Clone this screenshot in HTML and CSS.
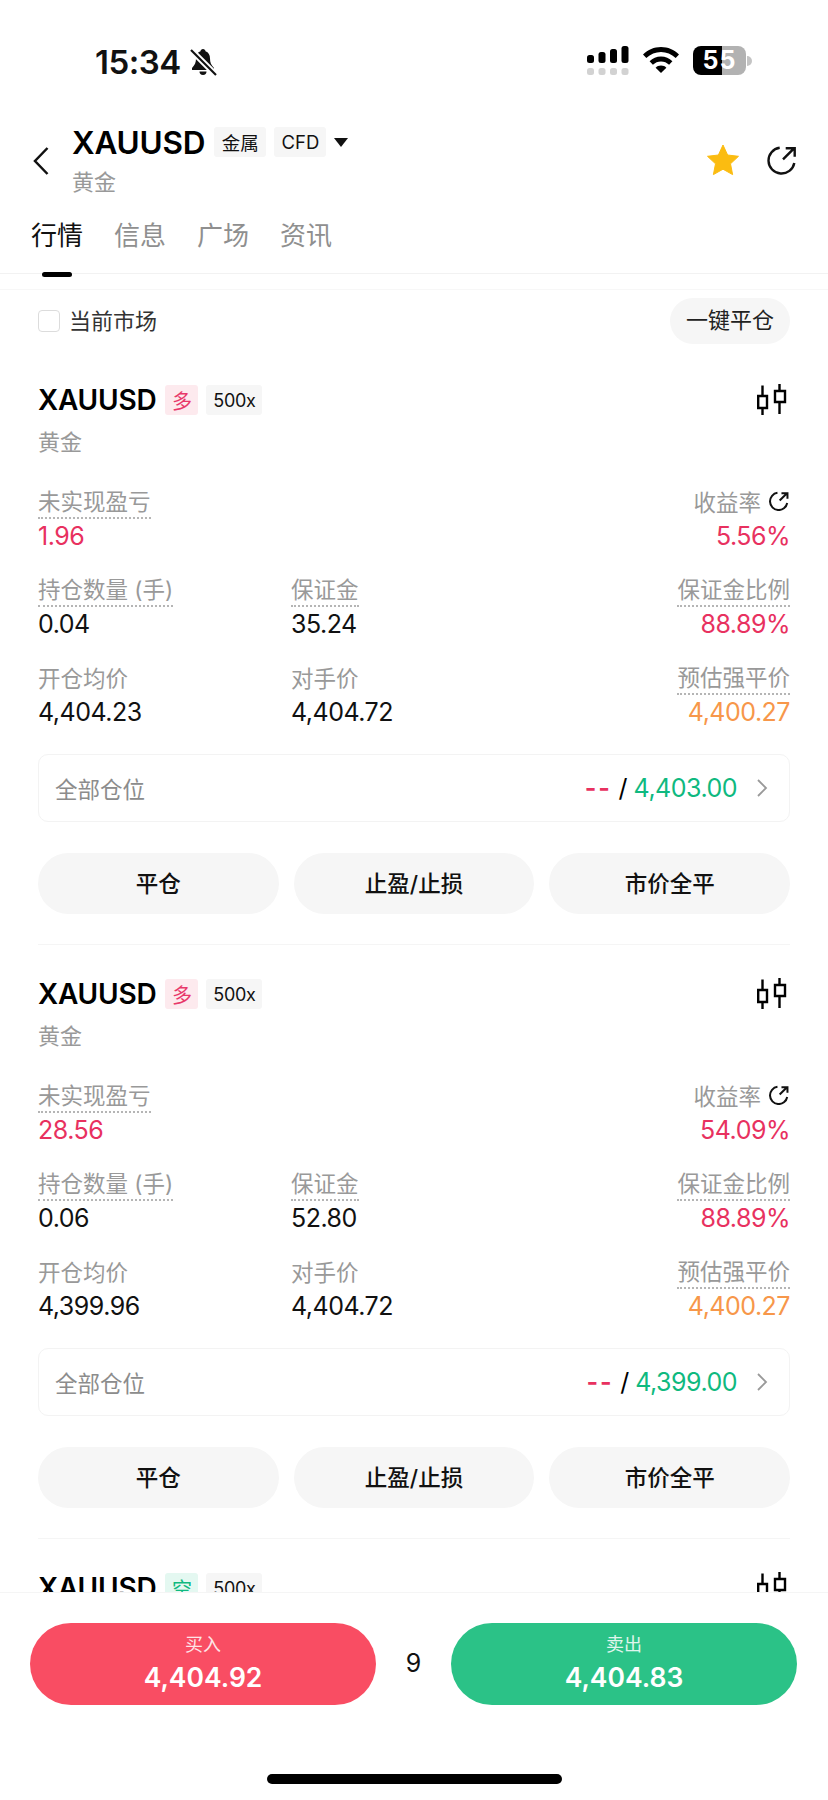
FILE: index.html
```html
<!DOCTYPE html>
<html lang="en">
<head>
    <meta charset="UTF-8">
    <meta name="viewport" content="width=device-width, initial-scale=1.0">
    <title>XAUUSD</title>
    <link rel="stylesheet" href="styles.css">
</head>
<body>
<div class="page">
    <div class="status-bar">
        <div class="status-left">
            <span class="time">15:34</span>
            <svg class="bell" width="28" height="28" viewBox="0 0 28 28">
                <path d="M14 1c-1.500 0-2.300 1-2.500 2.200C8.500 4.200 7 7 7 10.500c0 4-1.200 6.500-4 9.500v2h22v-2c-2.800-3-4-5.500-4-9.500 0-3.500-1.500-6.300-4.500-7.300C16.300 2 15.500 1 14 1z" fill="#111"/>
                <path d="M10.500 23.500a3.500 3.500 0 0 0 7 0z" fill="#111"/>
                <path d="M2 2l25 25" stroke="#fff" stroke-width="6"/>
                <path d="M2 2l25 25" stroke="#111" stroke-width="2.200"/>
            </svg>
        </div>
        <div class="status-right">
            <svg class="signal" width="42" height="30" viewBox="0 0 42 30">
                <rect x="0" y="9" width="7" height="8" rx="2.500" fill="#000"/>
                <rect x="11.500" y="6" width="7" height="11" rx="2.500" fill="#000"/>
                <rect x="23" y="3" width="7" height="14" rx="2.500" fill="#000"/>
                <rect x="34.500" y="0" width="7" height="17" rx="2.500" fill="#000"/>
                <rect x="0" y="22" width="7" height="7" rx="2.500" fill="#d2d2d2"/>
                <rect x="11.500" y="22" width="7" height="7" rx="2.500" fill="#d2d2d2"/>
                <rect x="23" y="22" width="7" height="7" rx="2.500" fill="#d2d2d2"/>
                <rect x="34.500" y="22" width="7" height="7" rx="2.500" fill="#d2d2d2"/>
            </svg>
            <svg class="wifi" width="36" height="26" viewBox="0 0 36 26">
                <path d="M18 0C11 0 5 2.700 0 7.500l3.300 3.600C7.500 7 12.500 5 18 5s10.500 2 14.700 6.100L36 7.500C31 2.700 25 0 18 0z" fill="#000"/>
                <path d="M18 9.500c-4.500 0-8.300 1.700-11.400 4.700l3.300 3.500c2.200-2.100 5-3.300 8.100-3.300s5.900 1.200 8.100 3.300l3.300-3.500C26.300 11.200 22.500 9.500 18 9.500z" fill="#000"/>
                <path d="M18 18.500c-2.200 0-4.100.8-5.400 2.200L18 26l5.400-5.300c-1.300-1.400-3.200-2.200-5.400-2.200z" fill="#000"/>
            </svg>
            <div class="battery"><span class="battery-text">55</span></div>
            <span class="battery-nub"></span>
        </div>
    </div>

    <div class="top-head">
        <svg class="back" width="18" height="30" viewBox="0 0 18 30">
            <path d="M15.500 2L3 15l12.500 13" fill="none" stroke="#111" stroke-width="2.500"/>
        </svg>
        <div class="top-title">
            <div class="title-row">
                <span class="symbol-big">XAUUSD</span>
                <span class="tag tag-top">金属</span>
                <span class="tag tag-top">CFD</span>
                <span class="caret"></span>
            </div>
            <div class="sub-name">黄金</div>
        </div>
        <svg class="star" width="32" height="32" viewBox="0 0 32 32">
            <path d="M16 1l4.600 10 10.900 1.300-8 7.500 2.100 10.800L16 25.200 6.400 30.600l2.100-10.800-8-7.500L11.400 11z" fill="#fbbc11" stroke="#fbbc11" stroke-linejoin="round"/>
        </svg>
        <svg class="share" width="30" height="30" viewBox="0 0 30 30">
            <path d="M12.700 2.700A13 13 0 1 0 27.300 18" fill="none" stroke="#111" stroke-width="2.400"/>
            <path d="M16 14.300L27 3.300M18.700 3.300h9v8.400" fill="none" stroke="#111" stroke-width="2.400"/>
        </svg>
    </div>

    <div class="tabs">
        <span class="tab tab-active">行情</span>
        <span class="tab">信息</span>
        <span class="tab">广场</span>
        <span class="tab">资讯</span>
    </div>
    <div class="tabs-gap"></div>

    <div class="content">
        <div class="toolbar">
            <span class="check"></span>
            <span class="check-label">当前市场</span>
            <span class="close-all">一键平仓</span>
        </div>

        <div class="card">
            <div class="card-head">
                <span class="symbol">XAUUSD</span>
                <span class="tag tag-long">多</span>
                <span class="tag tag-lev">500x</span>
                <svg class="candle" width="30" height="32" viewBox="0 0 30 32">
                    <path d="M5.500 1.500V12M5.500 24v7M1.200 12h8.800v12H1.200zM22.500 0v7M22.500 18v12M18 7h10v11H18z" fill="none" stroke="#000" stroke-width="2.400"/>
                </svg>
            </div>
            <div class="card-name">黄金</div>
            <div class="stat-row first">
                <div class="stat">
                    <span class="label dotted">未实现盈亏</span>
                    <span class="value red">1.96</span>
                </div>
                <div class="stat right">
                    <span class="label">收益率
                        <svg class="share-small" width="20" height="20" viewBox="0 0 30 30">
                            <path d="M12.700 2.700A13 13 0 1 0 27.300 18" fill="none" stroke="#111" stroke-width="3"/>
                            <path d="M16 14.300L27 3.300M18.700 3.300h9v8.400" fill="none" stroke="#111" stroke-width="3"/>
                        </svg>
                    </span>
                    <span class="value red">5.56%</span>
                </div>
            </div>
            <div class="stat-row">
                <div class="stat col-a">
                    <span class="label dotted">持仓数量 (手)</span>
                    <span class="value">0.04</span>
                </div>
                <div class="stat col-b">
                    <span class="label dotted">保证金</span>
                    <span class="value">35.24</span>
                </div>
                <div class="stat right">
                    <span class="label dotted">保证金比例</span>
                    <span class="value red">88.89%</span>
                </div>
            </div>
            <div class="stat-row">
                <div class="stat col-a">
                    <span class="label">开仓均价</span>
                    <span class="value">4,404.23</span>
                </div>
                <div class="stat col-b">
                    <span class="label">对手价</span>
                    <span class="value">4,404.72</span>
                </div>
                <div class="stat right">
                    <span class="label dotted">预估强平价</span>
                    <span class="value orange">4,400.27</span>
                </div>
            </div>
            <div class="all-pos">
                <span class="all-label">全部仓位</span>
                <span class="all-value"><span class="red dashes">--</span> / <span class="green">4,403.00</span></span>
                <svg class="chev" width="12" height="20" viewBox="0 0 12 20">
                    <path d="M2 2l8 8-8 8" fill="none" stroke="#999" stroke-width="1.800"/>
                </svg>
            </div>
            <div class="actions">
                <span class="action">平仓</span>
                <span class="action">止盈/止损</span>
                <span class="action">市价全平</span>
            </div>
        </div>

        <div class="card">
            <div class="card-head">
                <span class="symbol">XAUUSD</span>
                <span class="tag tag-long">多</span>
                <span class="tag tag-lev">500x</span>
                <svg class="candle" width="30" height="32" viewBox="0 0 30 32">
                    <path d="M5.500 1.500V12M5.500 24v7M1.200 12h8.800v12H1.200zM22.500 0v7M22.500 18v12M18 7h10v11H18z" fill="none" stroke="#000" stroke-width="2.400"/>
                </svg>
            </div>
            <div class="card-name">黄金</div>
            <div class="stat-row first">
                <div class="stat">
                    <span class="label dotted">未实现盈亏</span>
                    <span class="value red">28.56</span>
                </div>
                <div class="stat right">
                    <span class="label">收益率
                        <svg class="share-small" width="20" height="20" viewBox="0 0 30 30">
                            <path d="M12.700 2.700A13 13 0 1 0 27.300 18" fill="none" stroke="#111" stroke-width="3"/>
                            <path d="M16 14.300L27 3.300M18.700 3.300h9v8.400" fill="none" stroke="#111" stroke-width="3"/>
                        </svg>
                    </span>
                    <span class="value red">54.09%</span>
                </div>
            </div>
            <div class="stat-row">
                <div class="stat col-a">
                    <span class="label dotted">持仓数量 (手)</span>
                    <span class="value">0.06</span>
                </div>
                <div class="stat col-b">
                    <span class="label dotted">保证金</span>
                    <span class="value">52.80</span>
                </div>
                <div class="stat right">
                    <span class="label dotted">保证金比例</span>
                    <span class="value red">88.89%</span>
                </div>
            </div>
            <div class="stat-row">
                <div class="stat col-a">
                    <span class="label">开仓均价</span>
                    <span class="value">4,399.96</span>
                </div>
                <div class="stat col-b">
                    <span class="label">对手价</span>
                    <span class="value">4,404.72</span>
                </div>
                <div class="stat right">
                    <span class="label dotted">预估强平价</span>
                    <span class="value orange">4,400.27</span>
                </div>
            </div>
            <div class="all-pos">
                <span class="all-label">全部仓位</span>
                <span class="all-value"><span class="red dashes">--</span> / <span class="green">4,399.00</span></span>
                <svg class="chev" width="12" height="20" viewBox="0 0 12 20">
                    <path d="M2 2l8 8-8 8" fill="none" stroke="#999" stroke-width="1.800"/>
                </svg>
            </div>
            <div class="actions">
                <span class="action">平仓</span>
                <span class="action">止盈/止损</span>
                <span class="action">市价全平</span>
            </div>
        </div>

        <div class="card">
            <div class="card-head">
                <span class="symbol">XAUUSD</span>
                <span class="tag tag-short">空</span>
                <span class="tag tag-lev">500x</span>
                <svg class="candle" width="30" height="32" viewBox="0 0 30 32">
                    <path d="M5.500 1.500V12M5.500 24v7M1.200 12h8.800v12H1.200zM22.500 0v7M22.500 18v12M18 7h10v11H18z" fill="none" stroke="#000" stroke-width="2.400"/>
                </svg>
            </div>
        </div>
    </div>

    <div class="bottom-bar">
        <div class="trade-btn buy">
            <span class="trade-label">买入</span>
            <span class="trade-price">4,404.92</span>
        </div>
        <span class="spread">9</span>
        <div class="trade-btn sell">
            <span class="trade-label">卖出</span>
            <span class="trade-price">4,404.83</span>
        </div>
    </div>
    <div class="home-area"><span class="home-bar"></span></div>
</div>
</body>
</html>
```
FILE: styles.css
```css
* {
    box-sizing: border-box;
}

body {
    margin: 0;
    background-color: #fff;
    color: #000;
    font-family: Inter, "Noto Sans CJK SC", sans-serif;
}

.page {
    width: 828px;
    height: 1800px;
    display: flex;
    flex-direction: column;
    overflow: hidden;
}

/* status bar */
.status-bar {
    height: 110px;
    flex-shrink: 0;
    display: flex;
    justify-content: space-between;
    padding: 46px 76px 0 95px;
}

.status-left {
    display: flex;
    align-items: flex-start;
    gap: 8px;
}

.time {
    font-size: 33px;
    font-weight: 600;
    line-height: 32px;
    letter-spacing: -0.5px;
    color: #111;
}

.bell {
    margin-top: 2px;
}

.status-right {
    display: flex;
    align-items: flex-start;
}

.wifi {
    margin: 1px 14px 0;
}

.battery {
    width: 53px;
    height: 29px;
    border-radius: 8px;
    background: linear-gradient(to right, #000 55%, #b2b2b2 55%);
    color: #fff;
    text-align: center;
}

.battery-text {
    font-size: 25px;
    font-weight: 700;
    line-height: 29px;
    letter-spacing: 1px;
}

.battery-nub {
    width: 5px;
    height: 10px;
    margin: 10px 0 0 1px;
    border-radius: 0 5px 5px 0;
    background-color: #c4c4c4;
}

/* header */
.top-head {
    height: 92px;
    flex-shrink: 0;
    display: flex;
    align-items: flex-start;
    padding: 15px 31px 0 32px;
}

.back {
    margin: 21px 22px 0 0;
}

.top-title {
    flex: 1;
}

.title-row {
    display: flex;
    align-items: center;
    height: 34px;
}

.symbol-big {
    font-size: 31.500px;
    font-weight: 600;
    letter-spacing: -0.2px;
    margin-right: 9px;
}

.tag {
    display: inline-flex;
    align-items: center;
    justify-content: center;
    border-radius: 3px;
    background-color: #f6f6f6;
    color: #111;
    font-size: 18.500px;
}

.tag-top {
    width: 52px;
    height: 30px;
    margin-right: 8px;
}

.caret {
    width: 0;
    height: 0;
    border-left: 7px solid transparent;
    border-right: 7px solid transparent;
    border-top: 9px solid #111;
}

.sub-name {
    margin-top: 8px;
    font-size: 22px;
    line-height: 30px;
    color: #999;
}

.star {
    margin: 19px 28px 0 0;
}

.share {
    margin-top: 20px;
}

/* tabs */
.tabs {
    height: 72px;
    flex-shrink: 0;
    display: flex;
    gap: 31px;
    padding: 16px 0 0 31px;
    border-bottom: 1px solid #f2f2f2;
}

.tab {
    position: relative;
    width: 52px;
    font-size: 26px;
    line-height: 36px;
    color: #8f8f8f;
}

.tab-active {
    color: #111;
}

.tab-active::after {
    content: "";
    position: absolute;
    left: 11px;
    top: 54px;
    width: 30px;
    height: 5px;
    border-radius: 3px;
    background-color: #000;
}

.tabs-gap {
    height: 16px;
    flex-shrink: 0;
    border-bottom: 1px solid #f7f7f7;
}

/* scroll area */
.content {
    flex: 1;
    overflow: hidden;
}

.toolbar {
    display: flex;
    align-items: center;
    height: 46px;
    margin-top: 8px;
    padding: 0 38px;
}

.check {
    width: 22px;
    height: 22px;
    border: 1.500px solid #dcdcdc;
    border-radius: 4px;
}

.check-label {
    margin-left: 9px;
    padding-bottom: 4px;
    font-size: 22px;
    color: #333;
}

.close-all {
    margin-left: auto;
    width: 120px;
    height: 46px;
    border-radius: 23px;
    background-color: #f6f6f6;
    text-align: center;
    font-size: 22px;
    line-height: 44px;
    color: #222;
}

.card {
    margin: 0 38px;
    padding: 40px 0 30px;
    border-bottom: 1px solid #f5f5f5;
}

.card + .card {
    padding-top: 33px;
}

.card-head {
    display: flex;
    align-items: center;
    height: 32px;
}

.symbol {
    font-size: 28px;
    font-weight: 600;
    letter-spacing: -0.2px;
    margin-right: 9px;
}

.tag-long,
.tag-short,
.tag-lev {
    height: 30px;
}

.tag-long {
    width: 33px;
    margin-right: 8px;
    background-color: #fdeaee;
    color: #e8386a;
    font-size: 20px;
}

.tag-short {
    width: 33px;
    margin-right: 8px;
    background-color: #e4f8f1;
    color: #0fb97f;
    font-size: 20px;
}

.tag-lev {
    width: 56px;
    font-size: 18px;
    letter-spacing: -0.3px;
}

.candle {
    margin-left: auto;
    margin-right: 3px;
}

.card-name {
    margin-top: 11px;
    font-size: 22px;
    line-height: 30px;
    color: #999;
}

.stat-row {
    display: flex;
    margin-top: 22px;
}

.stat-row.first {
    margin-top: 28px;
    justify-content: space-between;
}

.stat {
    display: flex;
    flex-direction: column;
    align-items: flex-start;
}

.col-a {
    width: 253px;
}

.col-b {
    flex: 1;
}

.right {
    align-items: flex-end;
}

.label {
    display: flex;
    align-items: center;
    height: 34px;
    padding-bottom: 2px;
    font-size: 22.500px;
    color: #999;
}

.dotted {
    border-bottom: 2px dotted #b5b5b5;
}

.share-small {
    margin: 0 1px 0 8px;
}

.value {
    margin-top: 2px;
    font-size: 25px;
    line-height: 30px;
    letter-spacing: -0.5px;
    color: #111;
}

.red {
    color: #e8315f;
}

.orange {
    color: #f7974a;
}

.green {
    color: #0fb97f;
}

.all-pos {
    display: flex;
    align-items: center;
    height: 68px;
    margin-top: 27px;
    padding: 0 21px 0 16px;
    border: 1.500px solid #f3f3f3;
    border-radius: 10px;
}

.all-label {
    font-size: 22.500px;
    color: #8c8c8c;
}

.all-value {
    margin-left: auto;
    font-size: 25px;
    letter-spacing: -0.5px;
}

.dashes {
    font-weight: 600;
    letter-spacing: 2px;
}

.chev {
    margin-left: 19px;
}

.actions {
    display: flex;
    gap: 15px;
    margin-top: 31px;
}

.action {
    flex: 1;
    height: 61px;
    border-radius: 31px;
    background-color: #f6f6f6;
    text-align: center;
    font-size: 22.500px;
    font-weight: 500;
    line-height: 61px;
    color: #111;
}

/* bottom */
.bottom-bar {
    height: 170px;
    flex-shrink: 0;
    display: flex;
    align-items: flex-start;
    justify-content: space-between;
    padding: 30px 31px 0 30px;
    border-top: 1px solid #f5f5f5;
    background-color: #fff;
}

.trade-btn {
    width: 346px;
    height: 82px;
    border-radius: 41px;
    display: flex;
    flex-direction: column;
    align-items: center;
    color: #fff;
}

.buy {
    background-color: #f94d63;
}

.sell {
    background-color: #2bc287;
}

.trade-label {
    margin-top: 10px;
    font-size: 18px;
    line-height: 24px;
    opacity: 0.85;
}

.trade-price {
    margin-top: 2px;
    font-size: 26.500px;
    font-weight: 600;
    line-height: 36px;
}

.spread {
    font-size: 25px;
    line-height: 80px;
    color: #111;
}

.home-area {
    height: 38px;
    flex-shrink: 0;
    display: flex;
    justify-content: center;
    padding-top: 12px;
    background-color: #fff;
}

.home-bar {
    width: 295px;
    height: 10px;
    border-radius: 5px;
    background-color: #000;
}
```
